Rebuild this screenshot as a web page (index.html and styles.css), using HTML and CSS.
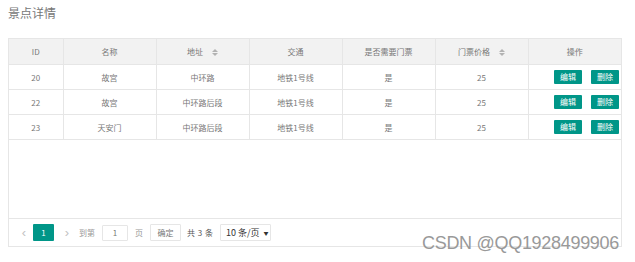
FILE: index.html
```html
<!DOCTYPE html>
<html lang="zh">
<head>
    <meta charset="UTF-8">
    <title>景点详情</title>
    <link rel="stylesheet" href="styles.css">
</head>
<body>

<!-- 标题 -->
<div class="page-title">景点详情</div>

<!-- 表格 -->
<div class="grid">
    <div class="grid-body">
        <table class="grid-table">
            <colgroup>
                <col style="width:54px">
                <col style="width:93px">
                <col style="width:93px">
                <col style="width:93px">
                <col style="width:93px">
                <col style="width:93px">
                <col>
            </colgroup>
            <thead>
                <tr>
                    <th>ID</th>
                    <th>名称</th>
                    <th>地址<span class="sort"><i class="up"></i><i class="down"></i></span></th>
                    <th>交通</th>
                    <th>是否需要门票</th>
                    <th>门票价格<span class="sort"><i class="up"></i><i class="down"></i></span></th>
                    <th>操作</th>
                </tr>
            </thead>
            <tbody>
                <tr>
                    <td>20</td>
                    <td>故宫</td>
                    <td>中环路</td>
                    <td>地铁1号线</td>
                    <td>是</td>
                    <td>25</td>
                    <td class="ops"><button class="btn">编辑</button><button class="btn">删除</button></td>
                </tr>
                <tr>
                    <td>22</td>
                    <td>故宫</td>
                    <td>中环路后段</td>
                    <td>地铁1号线</td>
                    <td>是</td>
                    <td>25</td>
                    <td class="ops"><button class="btn">编辑</button><button class="btn">删除</button></td>
                </tr>
                <tr>
                    <td>23</td>
                    <td>天安门</td>
                    <td>中环路后段</td>
                    <td>地铁1号线</td>
                    <td>是</td>
                    <td>25</td>
                    <td class="ops"><button class="btn">编辑</button><button class="btn">删除</button></td>
                </tr>
            </tbody>
        </table>
    </div>

    <!-- 分页 -->
    <div class="pager">
        <span class="arrow disabled">&lsaquo;</span>
        <span class="page-cur">1</span>
        <span class="arrow disabled">&rsaquo;</span>
        <span class="pager-text skip-label">到第</span>
        <input class="pager-input" type="text" value="1">
        <span class="pager-text">页</span>
        <button class="pager-btn">确定</button>
        <span class="pager-count">共 3 条</span>
        <div class="pager-select">10 条/页 <span class="caret">&#9660;</span></div>
    </div>
</div>

<div class="watermark">CSDN @QQ1928499906</div>

</body>
</html>
```

FILE: styles.css
```css
/* 页面 */
body {
    margin: 0;
    padding: 0 8px;
    background-color: #fff;
    font-family: "Noto Sans CJK SC", "Liberation Sans", sans-serif;
    color: #777;
    position: relative;
    width: 619px;
    height: 262px;
    overflow: hidden;
}

.page-title {
    height: 26px;
    line-height: 26px;
    font-size: 12px;
    color: #777;
    margin-bottom: 12px;
}

/* 表格外框 */
.grid {
    width: 612px;
    border: 1px solid #e6e6e6;
}

.grid-body {
    height: 179px;
}

.grid-table {
    width: 100%;
    border-collapse: collapse;
    table-layout: fixed;
}

.grid-table th,
.grid-table td {
    padding: 0;
    text-align: center;
    font-size: 8px;
    font-weight: normal;
    color: #777;
    border-right: 1px solid #e6e6e6;
    border-bottom: 1px solid #e6e6e6;
    white-space: nowrap;
}

.grid-table th:last-child,
.grid-table td:last-child {
    border-right: none;
}

.grid-table th {
    height: 25px;
    background-color: #f2f2f2;
}

.grid-table td {
    height: 24px;
}

/* 排序图标 */
.sort {
    display: inline-flex;
    flex-direction: column;
    gap: 1px;
    margin-left: 9px;
    vertical-align: middle;
}

.sort i {
    width: 0;
    height: 0;
    border-left: 3px solid transparent;
    border-right: 3px solid transparent;
}

.sort .up {
    border-bottom: 3px solid #b2b2b2;
}

.sort .down {
    border-top: 3px solid #b2b2b2;
}

/* 操作按钮 */
.grid-table td.ops {
    text-align: right;
    padding-right: 2px;
}

.btn {
    display: inline-block;
    height: 14px;
    padding: 0 6px;
    margin-left: 9px;
    border: none;
    border-radius: 1px;
    background-color: #009688;
    color: #fff;
    font-family: inherit;
    font-size: 8px;
    line-height: 14px;
    vertical-align: middle;
}

/* 分页栏 */
.pager {
    display: flex;
    align-items: center;
    height: 27px;
    border-top: 1px solid #e6e6e6;
    padding-left: 10px;
    font-size: 8px;
}

.arrow {
    width: 10px;
    text-align: center;
    font-size: 13px;
    color: #c2c2c2;
    line-height: 16px;
    font-family: "Liberation Sans", sans-serif;
}

.page-cur {
    width: 21px;
    height: 17px;
    margin: 0 8px 0 4px;
    background-color: #009688;
    border-radius: 1px;
    color: #fff;
    font-size: 8px;
    line-height: 17px;
    text-align: center;
}

.pager-text {
    color: #999;
    margin: 0 7px;
}

.skip-label {
    margin-left: 7px;
}

.pager-input {
    width: 26px;
    height: 16px;
    box-sizing: border-box;
    border: 1px solid #e6e6e6;
    border-radius: 1px;
    padding: 0;
    text-align: center;
    font-family: inherit;
    font-size: 8px;
    color: #777;
    outline: none;
}

.pager-btn {
    width: 31px;
    height: 17px;
    box-sizing: border-box;
    margin-left: 0;
    border: 1px solid #e6e6e6;
    border-radius: 1px;
    background-color: #fff;
    padding: 0;
    font-family: inherit;
    font-size: 8px;
    color: #777;
}

.pager-count {
    margin: 0 7px 0 6px;
    color: #555;
    word-spacing: 1px;
}

.pager-select {
    width: 51px;
    height: 17px;
    box-sizing: border-box;
    border: 1px solid #e6e6e6;
    border-radius: 1px;
    padding-left: 5px;
    line-height: 15px;
    color: #333;
    font-size: 9px;
    white-space: nowrap;
}

.caret {
    font-size: 5px;
    margin-left: 2px;
    vertical-align: 1px;
    color: #333;
}

/* 水印 */
.watermark {
    position: absolute;
    left: 422px;
    top: 233px;
    font-family: "Liberation Sans", sans-serif;
    font-size: 18px;
    letter-spacing: -0.3px;
    color: #999;
    white-space: nowrap;
}
```
